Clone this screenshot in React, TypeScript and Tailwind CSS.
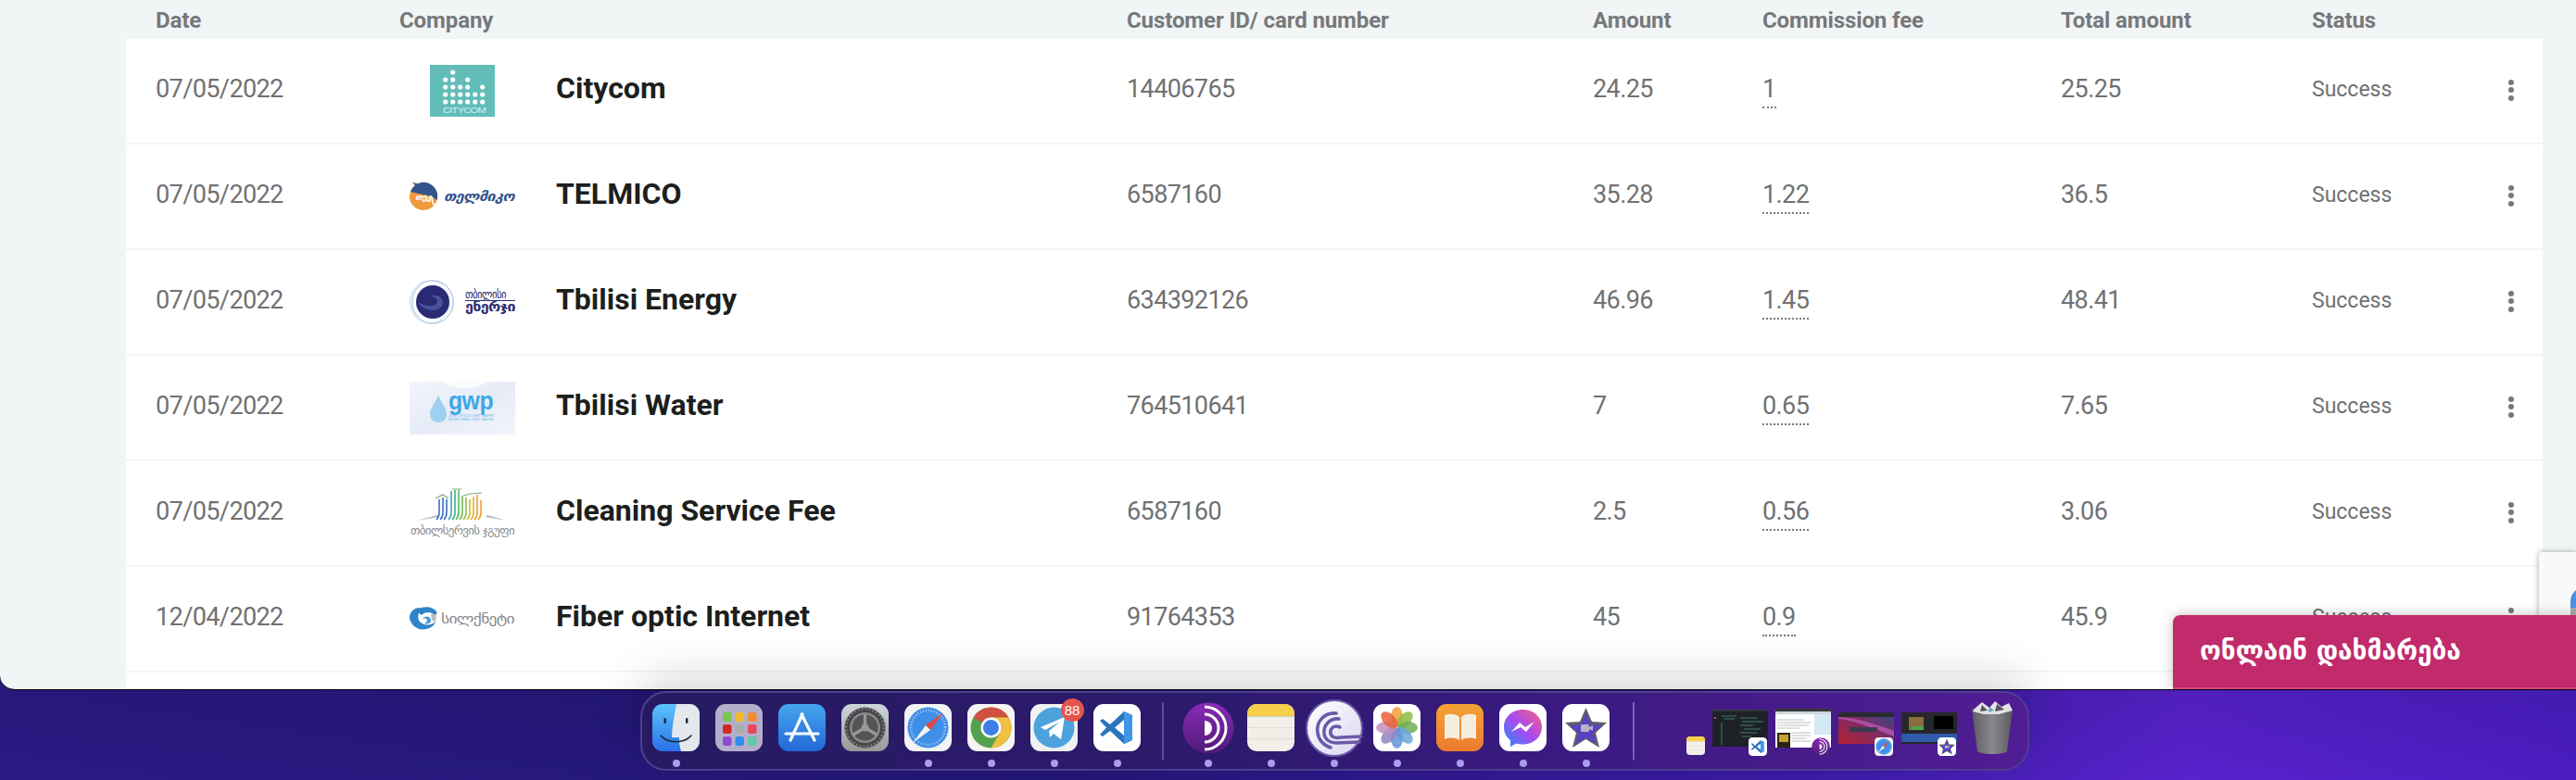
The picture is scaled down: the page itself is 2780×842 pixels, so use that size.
import type { ReactNode } from "react";

const columns = "grid grid-cols-[263px_785px_503px_183px_322px_271px_1fr]";
const georgian = "'DejaVu Sans', sans-serif";

function CitycomLogo() {
  const rows = [
    [0, 1, 0, 0, 0, 0],
    [1, 1, 0, 1, 0, 0],
    [1, 1, 1, 1, 0, 1],
    [1, 1, 1, 1, 1, 1],
    [1, 1, 1, 1, 1, 1],
  ];
  return (
    <svg width="114" height="56" viewBox="0 0 114 56">
      <rect x="22" width="70" height="56" fill="#62bdb9" />
      {rows.map((row, y) =>
        row.map((on, x) => (on ? <circle key={`${x}-${y}`} cx={38.7 + x * 8} cy={8 + y * 8} r="2.6" fill="#fff" /> : null))
      )}
      <text x="36" y="52" fontFamily="Liberation Sans" fontSize="9" fill="#d9f1ef" textLength="46" lengthAdjust="spacingAndGlyphs">CITYCOM</text>
    </svg>
  );
}

function TelmicoLogo() {
  return (
    <svg width="114" height="32" viewBox="0 0 114 32">
      <circle cx="15" cy="16" r="15" fill="#ef9a3f" />
      <path d="M3 1 L9 2.2 A15 15 0 0 1 29.5 20 L24 16 L1 11 A15 15 0 0 1 6 4 Z" fill="#34548c" />
      <path d="M24 16 L25 23 L29 28" fill="none" stroke="#fff" strokeWidth="1.5" />
      <text x="6" y="20" fontFamily={georgian} fontStyle="italic" fontWeight="700" fontSize="8" fill="#fff" textLength="17" lengthAdjust="spacingAndGlyphs">თეკ</text>
      <text x="37" y="21" fontFamily={georgian} fontStyle="italic" fontWeight="700" fontSize="15" fill="#34548c" textLength="76" lengthAdjust="spacingAndGlyphs">თელმიკო</text>
    </svg>
  );
}

function EnergyLogo() {
  return (
    <svg width="114" height="48" viewBox="0 0 114 48">
      <circle cx="24" cy="24" r="23.5" fill="none" stroke="#a9d3e6" strokeWidth="0.8" />
      <ellipse cx="25" cy="24" rx="22" ry="23" fill="none" stroke="#b4a8d8" strokeWidth="0.8" />
      <ellipse cx="23" cy="24" rx="21" ry="22.5" fill="none" stroke="#c5e2ee" strokeWidth="0.8" />
      <circle cx="25" cy="24" r="18" fill="#2a2a74" />
      <path d="M9 24 C14 34 30 36 35 28 C39 21 30 14 23 18 C28 18 32 22 29 26 C25 30 15 28 9 24 Z" fill="#5560a8" opacity="0.75" />
      <text x="60" y="20" fontFamily={georgian} fontSize="13" fill="#2b2a74" textLength="44" lengthAdjust="spacingAndGlyphs">თბილისი</text>
      <rect x="60" y="22" width="54" height="1" fill="#2b2a74" />
      <text x="60" y="34" fontFamily={georgian} fontWeight="700" fontSize="15" fill="#2b2a74" textLength="54" lengthAdjust="spacingAndGlyphs">ენერჯი</text>
    </svg>
  );
}

function GwpLogo() {
  return (
    <svg width="114" height="57" viewBox="0 0 114 57">
      <defs>
        <linearGradient id="gwpBg" x1="0" y1="0" x2="1" y2="1">
          <stop offset="0" stopColor="#f2f5fb" />
          <stop offset="0.5" stopColor="#e6ecf7" />
          <stop offset="1" stopColor="#f1f4fa" />
        </linearGradient>
      </defs>
      <rect width="114" height="57" fill="url(#gwpBg)" />
      <path d="M35 0 C50 10 70 8 85 0 Z" fill="#ffffff" opacity="0.8" />
      <path d="M31 15 C27 24 22 29 22 35 C22 41 26 44 31 44 C36 44 40 41 40 35 C40 29 35 24 31 15 Z" fill="#9fd0ef" />
      <text x="42" y="30" fontFamily="Liberation Sans" fontWeight="700" fontSize="28" fill="#3ea7e6" textLength="48" lengthAdjust="spacingAndGlyphs">gwp</text>
      <text x="42" y="38" fontFamily="Liberation Sans" fontSize="3.6" fill="#62b6e8" textLength="48">JOINT STOCK GWP WATER</text>
      <text x="42" y="42" fontFamily="Liberation Sans" fontSize="3.6" fill="#62b6e8" textLength="48">MORE THAN JUST WATER</text>
    </svg>
  );
}

function CleaningLogo() {
  const strokes = [
    ["#3f6fc0", 32, 12], ["#3f6fc0", 36, 10], ["#3f6fc0", 40, 12], ["#3fa4b0", 45, 3],
    ["#3fb08a", 49, 2], ["#55b860", 53, 2], ["#72bb50", 57, 8], ["#95bf45", 61, 10],
    ["#c3bd3d", 65, 12], ["#e6b030", 69, 9], ["#f0a030", 73, 7], ["#f0a030", 77, 13],
  ] as const;
  return (
    <svg width="114" height="54" viewBox="0 0 114 54">
      <path d="M8 35 L30 29 L32 31 Z M84 29 L105 35 L82 31 Z" fill="#b5b7b9" />
      {strokes.map(([color, x, top]) => (
        <path key={x} d={`M${x} ${top} L${x} 26 Q${x} 31 ${x - 3} 34`} fill="none" stroke={color} strokeWidth="1.6" />
      ))}
      <path d="M28 11 L36 7 L42 11 M46 1 L56 1 M58 8 L66 6 L78 5" fill="none" stroke="#7ca870" strokeWidth="1.2" />
      <text x="1" y="50" fontFamily={georgian} fontSize="12" fill="#8b8d8f" textLength="112" lengthAdjust="spacingAndGlyphs">თბილსერვის ჯგუფი</text>
    </svg>
  );
}

function SilknetLogo() {
  return (
    <svg width="114" height="26" viewBox="0 0 114 26">
      <path d="M10 1 C3 2 0 7 0 12 C1 20 9 26 18 24 C23 23 27 20 28 16 C24 20 15 21 11 16 C8 12 9 6 13 3 Z" fill="#2f83c8" />
      <path d="M8 3 C14 -1 25 -1 29 5 C30 7 29 9 27 9 C23 5 17 5 13 9 C11 8 9 6 8 3 Z" fill="#2f83c8" />
      <path d="M14 13 C17 9 23 10 23 15 C23 18 19 19 16 18 C18 17 20 15 18 13 C17 12 15 13 14 13 Z" fill="#4a9ad6" />
      <path d="M23 8 L29 8 L28 17 L24 14 Z" fill="#b9bbbd" />
      <text x="34" y="18" fontFamily={georgian} fontSize="15" fill="#85878a" textLength="79" lengthAdjust="spacingAndGlyphs">სილქნეტი</text>
    </svg>
  );
}

const transactions = [
  { date: "07/05/2022", logo: <CitycomLogo />, name: "Citycom", customer: "14406765", amount: "24.25", fee: "1", total: "25.25" },
  { date: "07/05/2022", logo: <TelmicoLogo />, name: "TELMICO", customer: "6587160", amount: "35.28", fee: "1.22", total: "36.5" },
  { date: "07/05/2022", logo: <EnergyLogo />, name: "Tbilisi Energy", customer: "634392126", amount: "46.96", fee: "1.45", total: "48.41" },
  { date: "07/05/2022", logo: <GwpLogo />, name: "Tbilisi Water", customer: "764510641", amount: "7", fee: "0.65", total: "7.65" },
  { date: "07/05/2022", logo: <CleaningLogo />, name: "Cleaning Service Fee", customer: "6587160", amount: "2.5", fee: "0.56", total: "3.06" },
  { date: "12/04/2022", logo: <SilknetLogo />, name: "Fiber optic Internet", customer: "91764353", amount: "45", fee: "0.9", total: "45.9" },
];

function Kebab() {
  return (
    <div className="absolute left-[212px] top-[calc(50%-12.5px)] flex flex-col gap-[2.5px]">
      <span className="w-[6px] h-[6px] rounded-full bg-[#77787a]" />
      <span className="w-[6px] h-[6px] rounded-full bg-[#77787a]" />
      <span className="w-[6px] h-[6px] rounded-full bg-[#77787a]" />
    </div>
  );
}

function Tile({ size = 51, children }: { size?: number; children: ReactNode }) {
  return (
    <svg width={size} height={size} viewBox="0 0 51 51" className="shrink-0">
      {children}
    </svg>
  );
}

function Finder({ size }: { size?: number }) {
  return (
    <Tile size={size}>
      <defs>
        <linearGradient id="finderL" x1="0" y1="0" x2="0" y2="1">
          <stop offset="0" stopColor="#5cc4fa" />
          <stop offset="1" stopColor="#2a70ea" />
        </linearGradient>
      </defs>
      <rect width="51" height="51" rx="11" fill="url(#finderL)" />
      <path d="M26 0 L40 0 A11 11 0 0 1 51 11 L51 40 A11 11 0 0 1 40 51 L31 51 C29 44 29 40 29 36 L21 36 C21 24 24 12 26 0 Z" fill="#e4e8ec" />
      <rect x="12.5" y="15" width="2.4" height="6" rx="1.2" fill="#1c2733" />
      <rect x="36" y="15" width="2.4" height="6" rx="1.2" fill="#1c2733" />
      <path d="M9 34 C17 43 34 43 42 34" fill="none" stroke="#1c2733" strokeWidth="1.6" strokeLinecap="round" />
    </Tile>
  );
}

function Launchpad() {
  const colors = ["#79c84a", "#f2b92e", "#ee8f2b", "#cf2b22", "#a9adb0", "#e9465a", "#8f4bd0", "#2f8cf0", "#5ccaa5"];
  return (
    <Tile>
      <rect width="51" height="51" rx="11" fill="#b5aecb" />
      {colors.map((c, i) => (
        <rect key={c} x={8 + (i % 3) * 13.5} y={9 + Math.floor(i / 3) * 13} width="9.5" height="10" rx="2.5" fill={c} />
      ))}
    </Tile>
  );
}

function AppStore() {
  return (
    <Tile>
      <defs>
        <linearGradient id="appStore" x1="0" y1="0" x2="0" y2="1">
          <stop offset="0" stopColor="#46a6ee" />
          <stop offset="1" stopColor="#2268d8" />
        </linearGradient>
      </defs>
      <rect width="51" height="51" rx="11" fill="url(#appStore)" />
      <path d="M26 11 L13 39 M25 11 L39 39 M8 32 L43 32" stroke="#fff" strokeWidth="3.2" strokeLinecap="round" fill="none" />
    </Tile>
  );
}

function SystemPrefs() {
  return (
    <Tile>
      <defs>
        <linearGradient id="prefs" x1="0" y1="0" x2="0" y2="1">
          <stop offset="0" stopColor="#cdd8dc" />
          <stop offset="1" stopColor="#989898" />
        </linearGradient>
      </defs>
      <rect width="51" height="51" rx="11" fill="url(#prefs)" />
      <circle cx="25.5" cy="25.5" r="22" fill="#47474a" />
      <circle cx="25.5" cy="25.5" r="20.5" fill="none" stroke="#77777a" strokeWidth="2.6" strokeDasharray="2 2" />
      <circle cx="25.5" cy="25.5" r="16.5" fill="#8a8a8d" />
      <circle cx="25.5" cy="25.5" r="14" fill="#545457" />
      <path d="M25.5 25.5 L25.5 11 M25.5 25.5 L13 33 M25.5 25.5 L38 33" stroke="#98989b" strokeWidth="3.4" />
      <circle cx="25.5" cy="25.5" r="4" fill="#98989b" />
    </Tile>
  );
}

function Safari({ size }: { size?: number }) {
  return (
    <Tile size={size}>
      <rect width="51" height="51" rx="11" fill="#f2f3f5" />
      <circle cx="25.5" cy="25.5" r="22" fill="#3f8ee8" />
      <circle cx="25.5" cy="25.5" r="18.5" fill="none" stroke="#cfe2f8" strokeWidth="2.5" strokeDasharray="0.8 2.2" />
      <path d="M42 9 L28 28 L23 23 Z" fill="#e6483d" />
      <path d="M9 42 L23 23 L28 28 Z" fill="#f3f3f3" />
    </Tile>
  );
}

function Chrome() {
  return (
    <Tile>
      <rect width="51" height="51" rx="11" fill="#f5f5f5" />
      <circle cx="25.5" cy="25.5" r="22" fill="#54a14f" />
      <path d="M25.5 3.5 A22 22 0 0 1 44.6 14.5 L25.5 14.5 A11 11 0 0 0 15.9 20 L6.4 14.5 A22 22 0 0 1 25.5 3.5 Z" fill="#d1503f" />
      <path d="M44.6 14.5 A22 22 0 0 1 25.5 47.5 L35 31 A11 11 0 0 0 35 20 L25.5 14.5 Z" fill="#f1bf42" />
      <circle cx="25.5" cy="25.5" r="11" fill="#fff" />
      <circle cx="25.5" cy="25.5" r="8.5" fill="#3f7fe8" />
    </Tile>
  );
}

function Telegram() {
  return (
    <Tile>
      <rect width="51" height="51" rx="11" fill="#f1f2f3" />
      <circle cx="25.5" cy="25.5" r="22" fill="#4ea2db" />
      <path d="M11 25 L37 14 L33 38 L25 32 L21 36 L20 29 L32 19 L16 28 Z" fill="#fff" />
    </Tile>
  );
}

function VsCode({ size }: { size?: number }) {
  return (
    <Tile size={size}>
      <rect width="51" height="51" rx="11" fill="#fff" />
      <path d="M33 8 L42 12 L42 39 L33 43 L18 29 L10 35 L7 33 L14 25.5 L7 18 L10 16 L18 22 Z M33 17 L23 25.5 L33 34 Z" fill="#2c74bd" />
      <path d="M33 8 L42 12 L42 39 L33 43 Z" fill="#3f96e6" />
    </Tile>
  );
}

function Tor({ size = 56 }: { size?: number }) {
  return (
    <svg width={size} height={size} viewBox="0 0 56 56" className="shrink-0">
      <defs>
        <linearGradient id="torBg" x1="0" y1="0" x2="0" y2="1">
          <stop offset="0" stopColor="#8a2bb8" />
          <stop offset="1" stopColor="#4f1a78" />
        </linearGradient>
      </defs>
      <circle cx="28" cy="28" r="27.5" fill="url(#torBg)" />
      <path d="M24 5 A23 23 0 0 1 24 51 M24 13 A15 15 0 0 1 24 43" fill="none" stroke="#fff" strokeWidth="3" />
      <path d="M24 20 A8 8 0 0 1 24 36 Z" fill="#fff" />
    </svg>
  );
}

function Notes({ size }: { size?: number }) {
  return (
    <Tile size={size}>
      <rect width="51" height="51" rx="10" fill="#f2efe8" />
      <path d="M0 13 L0 10 A10 10 0 0 1 10 0 L41 0 A10 10 0 0 1 51 10 L51 13 Z" fill="#f8cf4b" />
      <rect y="13" width="51" height="1" fill="#cfcbc2" />
      <rect y="25" width="51" height="1" fill="#dfdcd4" />
      <rect y="37" width="51" height="1" fill="#dfdcd4" />
    </Tile>
  );
}

function BitTorrent() {
  return (
    <svg width="62" height="62" viewBox="0 0 62 62" className="shrink-0">
      <defs>
        <linearGradient id="btBg" x1="0" y1="0" x2="1" y2="1">
          <stop offset="0" stopColor="#ffffff" />
          <stop offset="1" stopColor="#dcd6f2" />
        </linearGradient>
      </defs>
      <circle cx="31" cy="31" r="30" fill="url(#btBg)" stroke="#6a5aa8" strokeWidth="2" />
      <path d="M33 15 C20 14 11 24 13 36 C14 44 20 50 27 52 M36 21 C26 20 19 28 20 37 C21 44 27 47 33 47 L58 46 M37 30 C30 27 26 32 27 37 C28 41 33 42 38 41 L60 40" fill="none" stroke="#6a5aa8" strokeWidth="3.6" strokeLinecap="round" />
    </svg>
  );
}

function Photos() {
  const petals = ["#f0a03c", "#8dbd3e", "#6fae55", "#6aa6d8", "#5f96d8", "#8e87c4", "#c08fbf", "#e8603c"];
  return (
    <Tile>
      <rect width="51" height="51" rx="11" fill="#fff" />
      {petals.map((c, i) => (
        <ellipse key={c} cx="25.5" cy="14" rx="6.5" ry="11" fill={c} opacity="0.85" transform={`rotate(${i * 45} 25.5 25.5)`} />
      ))}
    </Tile>
  );
}

function Books() {
  return (
    <Tile>
      <defs>
        <linearGradient id="booksBg" x1="0" y1="0" x2="0" y2="1">
          <stop offset="0" stopColor="#f4a235" />
          <stop offset="1" stopColor="#ec7a2e" />
        </linearGradient>
      </defs>
      <rect width="51" height="51" rx="11" fill="url(#booksBg)" />
      <path d="M25 14 C21 10 14 10 9 12 L9 38 C14 36 21 36 25 39 Z M27 14 C31 10 38 10 43 12 L43 38 C38 36 31 36 27 39 Z" fill="#f5ede0" />
    </Tile>
  );
}

function Messenger() {
  return (
    <Tile>
      <defs>
        <linearGradient id="msgBg" x1="0" y1="1" x2="1" y2="0">
          <stop offset="0" stopColor="#2b8cf6" />
          <stop offset="0.5" stopColor="#a84af0" />
          <stop offset="1" stopColor="#f9617e" />
        </linearGradient>
      </defs>
      <rect width="51" height="51" rx="11" fill="#fff" />
      <path d="M25.5 6 C13.5 6 5 14.5 5 25 C5 31 7.5 35.5 12 39 L12 46 L18.5 42.5 C20.5 43.2 23 43.5 25.5 43.5 C37.5 43.5 46 35 46 25 C46 14.5 37.5 6 25.5 6 Z" fill="url(#msgBg)" />
      <path d="M13 30 L22 20 L28 25 L38 19 L29 30 L23 25 Z" fill="#fff" />
    </Tile>
  );
}

function IMovie({ size }: { size?: number }) {
  return (
    <Tile size={size}>
      <rect width="51" height="51" rx="11" fill="#fff" />
      <path d="M25.5 4 L32 19 L48 20 L36 31 L40 47 L25.5 38 L11 47 L15 31 L3 20 L19 19 Z" fill="#5e5e66" />
      <path d="M25.5 10 L30.5 22 L43 23 L33.5 31 L36.5 43 L25.5 36 L14.5 43 L17.5 31 L8 23 L20.5 22 Z" fill="#5b3fc4" />
      <rect x="20" y="22" width="9" height="8" rx="1.5" fill="#b7b4c8" />
      <path d="M29 25 L33 23 L33 29 L29 27 Z" fill="#b7b4c8" />
    </Tile>
  );
}

function Trash() {
  return (
    <svg width="46" height="60" viewBox="0 0 46 60" className="shrink-0">
      <defs>
        <linearGradient id="trashBg" x1="0" y1="0" x2="1" y2="0">
          <stop offset="0" stopColor="#5c5c62" />
          <stop offset="0.5" stopColor="#8a8a8e" />
          <stop offset="1" stopColor="#58585e" />
        </linearGradient>
      </defs>
      <path d="M1 10 L45 10 L39 56 C36 60 10 60 7 56 Z" fill="url(#trashBg)" />
      <path d="M4 10 L12 3 L20 9 L26 2 L33 8 L41 4 L45 12 L30 16 L14 16 L2 13 Z" fill="#e3e3e6" />
      <path d="M12 6 L18 12 L10 13 Z M28 5 L36 11 L26 13 Z" fill="#55565c" />
      <path d="M20 8 L25 12 L19 14 Z" fill="#5da8b5" />
    </svg>
  );
}

function CodeThumb() {
  return (
    <svg width="60" height="40" viewBox="0 0 60 40" className="block">
      <rect width="60" height="40" fill="#1e2226" />
      <rect width="60" height="2" fill="#33373c" />
      <path d="M10 7 H26 M13 10 H24 M10 14 V38 M30 9 H48 M32 13 H55 M30 17 H44 M34 21 H52 M30 25 H48 M32 29 H42" stroke="#3f7d63" strokeWidth="1" />
      <rect x="2" y="8" width="2" height="2" fill="#e0445c" />
    </svg>
  );
}

function BrowserThumb() {
  return (
    <svg width="60" height="42" viewBox="0 0 60 42" className="block">
      <rect width="60" height="42" fill="#fff" />
      <rect width="60" height="3" fill="#37383c" />
      <rect y="3" width="60" height="3" fill="#cfd6dc" />
      <rect x="42" y="6" width="18" height="22" fill="#d4e8f6" />
      <path d="M2 12 H30 M2 15 H38 M2 18 H36 M2 21 H26 M18 26 H38 M18 29 H38 M18 32 H34 M18 35 H38" stroke="#a7adb3" strokeWidth="0.8" />
      <rect x="2" y="26" width="14" height="16" fill="#2c2413" />
      <rect x="4" y="28" width="10" height="8" fill="#c4a135" />
    </svg>
  );
}

function DesktopThumb() {
  return (
    <svg width="60" height="34" viewBox="0 0 60 34" className="block">
      <defs>
        <linearGradient id="wallThumb" x1="0" y1="1" x2="1" y2="0">
          <stop offset="0" stopColor="#b5212e" />
          <stop offset="0.55" stopColor="#7d2c66" />
          <stop offset="1" stopColor="#2f4a86" />
        </linearGradient>
      </defs>
      <rect width="60" height="34" fill="url(#wallThumb)" />
      <rect width="60" height="5" fill="#2a2b30" />
      <path d="M0 7 C16 9 30 14 60 26 L60 20 C38 12 20 6 0 5 Z" fill="#c35bb8" opacity="0.7" />
      <rect x="12" y="16" width="30" height="5" fill="#3b3b4d" />
    </svg>
  );
}

function EditorThumb() {
  return (
    <svg width="60" height="34" viewBox="0 0 60 34" className="block">
      <rect width="60" height="34" fill="#26272b" />
      <rect x="8" y="5" width="16" height="14" fill="#8a6d3e" />
      <rect x="11" y="15" width="13" height="4" fill="#4da34f" />
      <rect x="35" y="4" width="21" height="14" fill="#000" />
      <rect y="23" width="60" height="9" fill="#2e5aa8" />
    </svg>
  );
}

const dockApps: { key: string; icon: ReactNode; open: boolean; badge?: string }[] = [
  { key: "finder", icon: <Finder />, open: true },
  { key: "launchpad", icon: <Launchpad />, open: false },
  { key: "appstore", icon: <AppStore />, open: false },
  { key: "prefs", icon: <SystemPrefs />, open: false },
  { key: "safari", icon: <Safari />, open: true },
  { key: "chrome", icon: <Chrome />, open: true },
  { key: "telegram", icon: <Telegram />, open: true, badge: "88" },
  { key: "vscode", icon: <VsCode />, open: true },
];

const dockApps2: { key: string; icon: ReactNode }[] = [
  { key: "tor", icon: <Tor /> },
  { key: "notes", icon: <Notes /> },
  { key: "bittorrent", icon: <BitTorrent /> },
  { key: "photos", icon: <Photos /> },
  { key: "books", icon: <Books /> },
  { key: "messenger", icon: <Messenger /> },
  { key: "imovie", icon: <IMovie /> },
];

function DockSlot({ icon, open, badge }: { icon: ReactNode; open: boolean; badge?: string }) {
  return (
    <div className="relative w-[68px] flex flex-col items-center">
      <div className="h-[51px] flex items-center justify-center">{icon}</div>
      <span className={open ? "mt-[9px] w-[8px] h-[8px] rounded-full bg-[#ab9cf0]" : "mt-[9px] w-[8px] h-[8px]"} />
      {badge && (
        <span className="absolute top-[-6px] right-[2px] w-[25px] h-[25px] rounded-full bg-[#e5544b] text-white text-[15px] leading-[25px] text-center font-['Liberation_Sans',sans-serif]">
          {badge}
        </span>
      )}
    </div>
  );
}

function DockThumb({ top, children, badge }: { top: string; children: ReactNode; badge: ReactNode }) {
  return (
    <div className={`relative w-[60px] h-[55px] ${top}`}>
      {children}
      <div className="absolute right-[1px] bottom-[-1px]">{badge}</div>
    </div>
  );
}

function Dock() {
  return (
    <div className="relative z-20 w-[1499px] h-[86px] rounded-[28px] border-2 border-[#4c3f8e] bg-[linear-gradient(90deg,#271a62_0%,#2c1a6c_40%,#3a1a80_65%,#511d94_100%)] shadow-[0_-14px_50px_rgba(0,0,0,0.17)] pl-[3px] pt-[12px] flex items-start">
      {dockApps.map((a) => (
        <DockSlot key={a.key} icon={a.icon} open={a.open} badge={a.badge} />
      ))}
      <div className="w-[30px] flex justify-center">
        <span className="block w-[2px] h-[62px] mt-[-2px] bg-[#5d4f9d]" />
      </div>
      {dockApps2.map((a) => (
        <DockSlot key={a.key} icon={a.icon} open />
      ))}
      <div className="w-[34px] flex justify-center">
        <span className="block w-[2px] h-[62px] mt-[-2px] bg-[#7a5fb5]" />
      </div>
      <div className="ml-[40px] mt-[35px]">
        <Notes size={20} />
      </div>
      <div className="ml-[8px]">
        <DockThumb top="pt-[6px]" badge={<VsCode size={20} />}>
          <CodeThumb />
        </DockThumb>
      </div>
      <div className="ml-[8px]">
        <DockThumb top="pt-[5px]" badge={<Tor size={20} />}>
          <BrowserThumb />
        </DockThumb>
      </div>
      <div className="ml-[8px]">
        <DockThumb top="pt-[9px]" badge={<Safari size={20} />}>
          <DesktopThumb />
        </DockThumb>
      </div>
      <div className="ml-[8px]">
        <DockThumb top="pt-[9px]" badge={<IMovie size={20} />}>
          <EditorThumb />
        </DockThumb>
      </div>
      <div className="ml-[15px] mt-[-5px]">
        <Trash />
      </div>
    </div>
  );
}

function Recaptcha() {
  return (
    <div className="absolute top-[596px] right-0 w-[40px] h-[90px] bg-[#f9f9f9] rounded-tl-[3px] shadow-[0_0_6px_rgba(0,0,0,0.35)] overflow-hidden">
      <div className="absolute left-[34px] top-[38px] w-[30px] h-[40px] rounded-t-full bg-[#4a90e2]" />
      <div className="absolute left-[34px] top-[60px] w-[30px] h-[30px] bg-[#ababab]" />
    </div>
  );
}

export default function App() {
  return (
    <div className="w-[2780px] h-[842px] overflow-hidden bg-[linear-gradient(180deg,rgba(8,5,35,0.88)_0%,rgba(8,5,35,0)_100%),linear-gradient(90deg,#2a1a85_0%,#221675_40%,#3c1ba8_70%,#5822cc_85%,#4a1cc0_100%)]">
      <div className="relative h-[745px] overflow-hidden bg-[#f1f5f6] border-b border-black rounded-bl-[16px] pl-[136px] pr-[36px] font-['Roboto',sans-serif]">
        <div className={`${columns} h-[42px] pl-[32px] items-center text-[24px] font-bold text-[#77787a] tracking-[-0.1px] pt-[1px]`}>
          <div>Date</div>
          <div>Company</div>
          <div>Customer ID/ card number</div>
          <div>Amount</div>
          <div>Commission fee</div>
          <div>Total amount</div>
          <div>Status</div>
        </div>
        {transactions.map((t) => (
          <div key={t.name} className={`${columns} h-[112px] mb-[2px] pl-[32px] items-center bg-white text-[27px] text-[#707173] tracking-[-0.6px]`}>
            <div className="pb-[4px]">{t.date}</div>
            <div className="flex items-center">
              <div className="ml-[11px] w-[114px] flex justify-center shrink-0">{t.logo}</div>
              <span className="ml-[44px] pb-[6px] text-[32px] font-bold text-[#1d1f1d] tracking-[0px]">{t.name}</span>
            </div>
            <div className="pb-[4px]">{t.customer}</div>
            <div className="pb-[4px]">{t.amount}</div>
            <div className="pb-[4px]">
              <span className="pb-[3px] border-b-2 border-dotted border-[#77787a]">{t.fee}</span>
            </div>
            <div className="pb-[4px]">{t.total}</div>
            <div className="relative flex items-center">
              <span className="pb-[1px] text-[23px] tracking-[0px]">Success</span>
              <Kebab />
            </div>
          </div>
        ))}
        <div className="h-[60px] bg-white" />
        <Recaptcha />
        <div className="absolute right-0 bottom-0 w-[435px] h-[80px] rounded-tl-[8px] bg-[#c12a6b] border-b-2 border-[#d6477f] shadow-[0_0_14px_rgba(0,0,0,0.25)] pl-[29px] flex items-center font-['DejaVu_Sans',sans-serif] text-white text-[28px] font-bold">
          ონლაინ დახმარება
        </div>
      </div>
      <div className="flex justify-center pt-[1px] pl-[100px]">
        <Dock />
      </div>
    </div>
  );
}
